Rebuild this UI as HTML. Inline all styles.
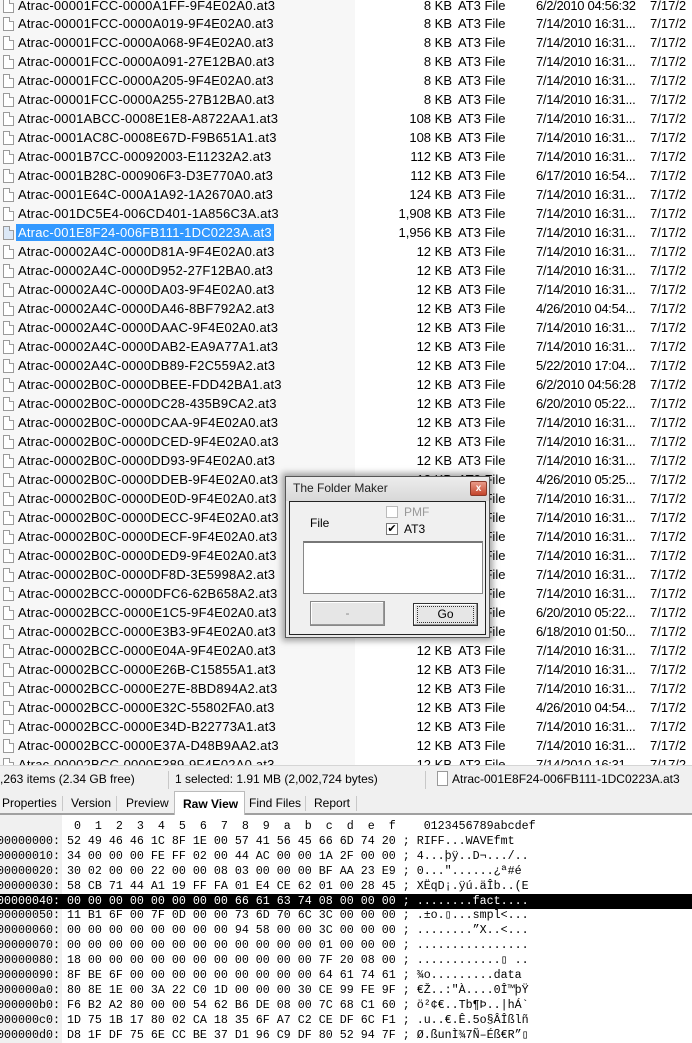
<!DOCTYPE html>
<html><head><meta charset="utf-8"><style>
*{margin:0;padding:0;box-sizing:border-box}
body{width:692px;height:1043px;overflow:hidden;background:#fff;position:relative;font-family:"Liberation Sans","Noto Sans CJK JP",sans-serif}
#list{position:absolute;left:0;top:0;width:692px;height:765px;overflow:hidden;background:#fff}
#list .band{position:absolute;left:0;top:0;width:355px;height:765px;background:#f7f7f7}
.r{position:absolute;left:0;height:19px;width:692px;font-size:13px;line-height:19px;color:#000;white-space:nowrap;letter-spacing:0.2px}
.r i{position:absolute;left:3px;top:3px;width:11px;height:14px;border:1px solid #9a9a9a;background:#fff}
.r i:after{content:"";position:absolute;right:-1px;top:-1px;width:4px;height:4px;background:#f7f7f7;border-left:1px solid #9a9a9a;border-bottom:1px solid #9a9a9a}
.r .n{position:absolute;left:18px}
.r .s{position:absolute;right:240px;text-align:right;letter-spacing:0}
.r .t{position:absolute;left:458px;letter-spacing:0}
.r .d{position:absolute;left:536px;letter-spacing:-0.3px}
.r .m{position:absolute;left:650px;letter-spacing:0}
.r.sel .n{background:#3399ff;color:#fff;left:16px;padding:0 2px;height:17px;top:1px;line-height:17px}
#status{position:absolute;left:0;top:765px;width:692px;height:28px;background:#f0f0f0;border-top:1px solid #d5d5d5;font-size:12px;line-height:27px;color:#000}
#status span{position:absolute}
.sep{position:absolute;top:5px;width:1px;height:18px;background:#c8c8c8}
#tabs{position:absolute;left:0;top:793px;width:692px;height:22px;background:#f0f0f0;border-bottom:2px solid #a0a0a0;font-size:12px;line-height:20px}
#tabs span{position:absolute;top:0}
#tabs .act{background:#fff;top:-2px;height:24px;border:1px solid #bbb;border-bottom:none;font-weight:bold;padding:2px 6px 0 8px}
#hex{position:absolute;left:0;top:815px;width:692px;height:228px;background:#fff;font-family:"Liberation Mono",monospace;font-size:11.67px;color:#000}
#hex .g{position:absolute;left:0;top:0;width:62px;height:228px;background:#f0f0f0}
#hex pre{position:absolute;left:-3px;top:4px;font-family:inherit;font-size:11.67px;line-height:14.9px}
#hex .hl{position:absolute;left:0;top:78.5px;width:692px;height:15px;background:#000}
#dlg{position:absolute;left:285px;top:476px;width:205px;height:162px;background:#e9e9e9;border:1px solid #555;box-shadow:0 0 6px 3px rgba(0,0,0,.35)}
#dlg .tb{position:absolute;left:0;top:0;width:203px;height:24px;background:linear-gradient(#ececec,#d8d8d8);font-size:12px;line-height:22px;padding-left:7px;color:#222}
#dlg .x{position:absolute;left:184px;top:4px;width:17px;height:15px;background:linear-gradient(#e89a88,#c4452c);border:1px solid #8a3a2a;border-radius:2px;color:#fff;font-size:10px;line-height:13px;text-align:center;font-weight:bold}
#dlg .in{position:absolute;left:3px;top:24px;width:197px;height:134px;border:1px solid #222;background:#f0f0f0}
.cb{position:absolute;width:12px;height:12px;border:1px solid #777;background:#fff;font-size:11px;line-height:10px;text-align:center}
.lbl{position:absolute;font-size:12px}
.btn{position:absolute;border:1px solid #888;background:#e6e6e6;font-size:12px;text-align:center;box-shadow:inset -1px -1px 0 #999,inset 1px 1px 0 #fff}
</style></head><body>
<div id="list"><div class="band"></div>
<div class="r" style="top:-4px"><i></i><span class="n">Atrac-00001FCC-0000A1FF-9F4E02A0.at3</span><span class="s">8 KB</span><span class="t">AT3 File</span><span class="d">6/2/2010 04:56:32</span><span class="m">7/17/2</span></div>
<div class="r" style="top:14px"><i></i><span class="n">Atrac-00001FCC-0000A019-9F4E02A0.at3</span><span class="s">8 KB</span><span class="t">AT3 File</span><span class="d">7/14/2010 16:31...</span><span class="m">7/17/2</span></div>
<div class="r" style="top:33px"><i></i><span class="n">Atrac-00001FCC-0000A068-9F4E02A0.at3</span><span class="s">8 KB</span><span class="t">AT3 File</span><span class="d">7/14/2010 16:31...</span><span class="m">7/17/2</span></div>
<div class="r" style="top:52px"><i></i><span class="n">Atrac-00001FCC-0000A091-27E12BA0.at3</span><span class="s">8 KB</span><span class="t">AT3 File</span><span class="d">7/14/2010 16:31...</span><span class="m">7/17/2</span></div>
<div class="r" style="top:71px"><i></i><span class="n">Atrac-00001FCC-0000A205-9F4E02A0.at3</span><span class="s">8 KB</span><span class="t">AT3 File</span><span class="d">7/14/2010 16:31...</span><span class="m">7/17/2</span></div>
<div class="r" style="top:90px"><i></i><span class="n">Atrac-00001FCC-0000A255-27B12BA0.at3</span><span class="s">8 KB</span><span class="t">AT3 File</span><span class="d">7/14/2010 16:31...</span><span class="m">7/17/2</span></div>
<div class="r" style="top:109px"><i></i><span class="n">Atrac-0001ABCC-0008E1E8-A8722AA1.at3</span><span class="s">108 KB</span><span class="t">AT3 File</span><span class="d">7/14/2010 16:31...</span><span class="m">7/17/2</span></div>
<div class="r" style="top:128px"><i></i><span class="n">Atrac-0001AC8C-0008E67D-F9B651A1.at3</span><span class="s">108 KB</span><span class="t">AT3 File</span><span class="d">7/14/2010 16:31...</span><span class="m">7/17/2</span></div>
<div class="r" style="top:147px"><i></i><span class="n">Atrac-0001B7CC-00092003-E11232A2.at3</span><span class="s">112 KB</span><span class="t">AT3 File</span><span class="d">7/14/2010 16:31...</span><span class="m">7/17/2</span></div>
<div class="r" style="top:166px"><i></i><span class="n">Atrac-0001B28C-000906F3-D3E770A0.at3</span><span class="s">112 KB</span><span class="t">AT3 File</span><span class="d">6/17/2010 16:54...</span><span class="m">7/17/2</span></div>
<div class="r" style="top:185px"><i></i><span class="n">Atrac-0001E64C-000A1A92-1A2670A0.at3</span><span class="s">124 KB</span><span class="t">AT3 File</span><span class="d">7/14/2010 16:31...</span><span class="m">7/17/2</span></div>
<div class="r" style="top:204px"><i></i><span class="n">Atrac-001DC5E4-006CD401-1A856C3A.at3</span><span class="s">1,908 KB</span><span class="t">AT3 File</span><span class="d">7/14/2010 16:31...</span><span class="m">7/17/2</span></div>
<div class="r sel" style="top:223px"><i style="background:#dbe8f7"></i><span class="n">Atrac-001E8F24-006FB111-1DC0223A.at3</span><span class="s">1,956 KB</span><span class="t">AT3 File</span><span class="d">7/14/2010 16:31...</span><span class="m">7/17/2</span></div>
<div class="r" style="top:242px"><i></i><span class="n">Atrac-00002A4C-0000D81A-9F4E02A0.at3</span><span class="s">12 KB</span><span class="t">AT3 File</span><span class="d">7/14/2010 16:31...</span><span class="m">7/17/2</span></div>
<div class="r" style="top:261px"><i></i><span class="n">Atrac-00002A4C-0000D952-27F12BA0.at3</span><span class="s">12 KB</span><span class="t">AT3 File</span><span class="d">7/14/2010 16:31...</span><span class="m">7/17/2</span></div>
<div class="r" style="top:280px"><i></i><span class="n">Atrac-00002A4C-0000DA03-9F4E02A0.at3</span><span class="s">12 KB</span><span class="t">AT3 File</span><span class="d">7/14/2010 16:31...</span><span class="m">7/17/2</span></div>
<div class="r" style="top:299px"><i></i><span class="n">Atrac-00002A4C-0000DA46-8BF792A2.at3</span><span class="s">12 KB</span><span class="t">AT3 File</span><span class="d">4/26/2010 04:54...</span><span class="m">7/17/2</span></div>
<div class="r" style="top:318px"><i></i><span class="n">Atrac-00002A4C-0000DAAC-9F4E02A0.at3</span><span class="s">12 KB</span><span class="t">AT3 File</span><span class="d">7/14/2010 16:31...</span><span class="m">7/17/2</span></div>
<div class="r" style="top:337px"><i></i><span class="n">Atrac-00002A4C-0000DAB2-EA9A77A1.at3</span><span class="s">12 KB</span><span class="t">AT3 File</span><span class="d">7/14/2010 16:31...</span><span class="m">7/17/2</span></div>
<div class="r" style="top:356px"><i></i><span class="n">Atrac-00002A4C-0000DB89-F2C559A2.at3</span><span class="s">12 KB</span><span class="t">AT3 File</span><span class="d">5/22/2010 17:04...</span><span class="m">7/17/2</span></div>
<div class="r" style="top:375px"><i></i><span class="n">Atrac-00002B0C-0000DBEE-FDD42BA1.at3</span><span class="s">12 KB</span><span class="t">AT3 File</span><span class="d">6/2/2010 04:56:28</span><span class="m">7/17/2</span></div>
<div class="r" style="top:394px"><i></i><span class="n">Atrac-00002B0C-0000DC28-435B9CA2.at3</span><span class="s">12 KB</span><span class="t">AT3 File</span><span class="d">6/20/2010 05:22...</span><span class="m">7/17/2</span></div>
<div class="r" style="top:413px"><i></i><span class="n">Atrac-00002B0C-0000DCAA-9F4E02A0.at3</span><span class="s">12 KB</span><span class="t">AT3 File</span><span class="d">7/14/2010 16:31...</span><span class="m">7/17/2</span></div>
<div class="r" style="top:432px"><i></i><span class="n">Atrac-00002B0C-0000DCED-9F4E02A0.at3</span><span class="s">12 KB</span><span class="t">AT3 File</span><span class="d">7/14/2010 16:31...</span><span class="m">7/17/2</span></div>
<div class="r" style="top:451px"><i></i><span class="n">Atrac-00002B0C-0000DD93-9F4E02A0.at3</span><span class="s">12 KB</span><span class="t">AT3 File</span><span class="d">7/14/2010 16:31...</span><span class="m">7/17/2</span></div>
<div class="r" style="top:470px"><i></i><span class="n">Atrac-00002B0C-0000DDEB-9F4E02A0.at3</span><span class="s">12 KB</span><span class="t">AT3 File</span><span class="d">4/26/2010 05:25...</span><span class="m">7/17/2</span></div>
<div class="r" style="top:489px"><i></i><span class="n">Atrac-00002B0C-0000DE0D-9F4E02A0.at3</span><span class="s">12 KB</span><span class="t">AT3 File</span><span class="d">7/14/2010 16:31...</span><span class="m">7/17/2</span></div>
<div class="r" style="top:508px"><i></i><span class="n">Atrac-00002B0C-0000DECC-9F4E02A0.at3</span><span class="s">12 KB</span><span class="t">AT3 File</span><span class="d">7/14/2010 16:31...</span><span class="m">7/17/2</span></div>
<div class="r" style="top:527px"><i></i><span class="n">Atrac-00002B0C-0000DECF-9F4E02A0.at3</span><span class="s">12 KB</span><span class="t">AT3 File</span><span class="d">7/14/2010 16:31...</span><span class="m">7/17/2</span></div>
<div class="r" style="top:546px"><i></i><span class="n">Atrac-00002B0C-0000DED9-9F4E02A0.at3</span><span class="s">12 KB</span><span class="t">AT3 File</span><span class="d">7/14/2010 16:31...</span><span class="m">7/17/2</span></div>
<div class="r" style="top:565px"><i></i><span class="n">Atrac-00002B0C-0000DF8D-3E5998A2.at3</span><span class="s">12 KB</span><span class="t">AT3 File</span><span class="d">7/14/2010 16:31...</span><span class="m">7/17/2</span></div>
<div class="r" style="top:584px"><i></i><span class="n">Atrac-00002BCC-0000DFC6-62B658A2.at3</span><span class="s">12 KB</span><span class="t">AT3 File</span><span class="d">7/14/2010 16:31...</span><span class="m">7/17/2</span></div>
<div class="r" style="top:603px"><i></i><span class="n">Atrac-00002BCC-0000E1C5-9F4E02A0.at3</span><span class="s">12 KB</span><span class="t">AT3 File</span><span class="d">6/20/2010 05:22...</span><span class="m">7/17/2</span></div>
<div class="r" style="top:622px"><i></i><span class="n">Atrac-00002BCC-0000E3B3-9F4E02A0.at3</span><span class="s">12 KB</span><span class="t">AT3 File</span><span class="d">6/18/2010 01:50...</span><span class="m">7/17/2</span></div>
<div class="r" style="top:641px"><i></i><span class="n">Atrac-00002BCC-0000E04A-9F4E02A0.at3</span><span class="s">12 KB</span><span class="t">AT3 File</span><span class="d">7/14/2010 16:31...</span><span class="m">7/17/2</span></div>
<div class="r" style="top:660px"><i></i><span class="n">Atrac-00002BCC-0000E26B-C15855A1.at3</span><span class="s">12 KB</span><span class="t">AT3 File</span><span class="d">7/14/2010 16:31...</span><span class="m">7/17/2</span></div>
<div class="r" style="top:679px"><i></i><span class="n">Atrac-00002BCC-0000E27E-8BD894A2.at3</span><span class="s">12 KB</span><span class="t">AT3 File</span><span class="d">7/14/2010 16:31...</span><span class="m">7/17/2</span></div>
<div class="r" style="top:698px"><i></i><span class="n">Atrac-00002BCC-0000E32C-55802FA0.at3</span><span class="s">12 KB</span><span class="t">AT3 File</span><span class="d">4/26/2010 04:54...</span><span class="m">7/17/2</span></div>
<div class="r" style="top:717px"><i></i><span class="n">Atrac-00002BCC-0000E34D-B22773A1.at3</span><span class="s">12 KB</span><span class="t">AT3 File</span><span class="d">7/14/2010 16:31...</span><span class="m">7/17/2</span></div>
<div class="r" style="top:736px"><i></i><span class="n">Atrac-00002BCC-0000E37A-D48B9AA2.at3</span><span class="s">12 KB</span><span class="t">AT3 File</span><span class="d">7/14/2010 16:31...</span><span class="m">7/17/2</span></div>
<div class="r" style="top:755px"><i></i><span class="n">Atrac-00002BCC-0000E389-9F4E02A0.at3</span><span class="s">12 KB</span><span class="t">AT3 File</span><span class="d">7/14/2010 16:31...</span><span class="m">7/17/2</span></div>
</div>

<div id="status">
<span style="left:0">,263 items (2.34 GB free)</span>
<div class="sep" style="left:168px"></div>
<span style="left:175px">1 selected: 1.91 MB (2,002,724 bytes)</span>
<div class="sep" style="left:425px"></div>
<div style="position:absolute;left:437px;top:5px;width:11px;height:15px;border:1px solid #999;background:#fff"></div>
<span style="left:452px">Atrac-001E8F24-006FB111-1DC0223A.at3</span>
</div>

<div id="tabs">
<span style="left:2px">Properties</span>
<div class="sep" style="left:62px;top:3px;height:15px"></div>
<span style="left:71px">Version</span>
<div class="sep" style="left:116px;top:3px;height:15px"></div>
<span style="left:126px">Preview</span>
<span class="act" style="left:174px">Raw View</span>
<span style="left:249px">Find Files</span>
<div class="sep" style="left:305px;top:3px;height:15px"></div>
<span style="left:314px">Report</span>
<div class="sep" style="left:356px;top:3px;height:15px"></div>
</div>

<div id="hex"><div class="g"></div><div class="hl"></div>
<pre>           0  1  2  3  4  5  6  7  8  9  a  b  c  d  e  f    0123456789abcdef
00000000: 52 49 46 46 1C 8F 1E 00 57 41 56 45 66 6D 74 20 ; RIFF...WAVEfmt 
00000010: 34 00 00 00 FE FF 02 00 44 AC 00 00 1A 2F 00 00 ; 4...þÿ..D¬.../..
00000020: 30 02 00 00 22 00 00 08 03 00 00 00 BF AA 23 E9 ; 0..."......¿ª#é
00000030: 58 CB 71 44 A1 19 FF FA 01 E4 CE 62 01 00 28 45 ; XËqD¡.ÿú.äÎb..(E
<span style="color:#fff">00000040: 00 00 00 00 00 00 00 00 66 61 63 74 08 00 00 00 ; ........fact....</span>
00000050: 11 B1 6F 00 7F 0D 00 00 73 6D 70 6C 3C 00 00 00 ; .±o.▯...smpl&lt;...
00000060: 00 00 00 00 00 00 00 00 94 58 00 00 3C 00 00 00 ; ........”X..&lt;...
00000070: 00 00 00 00 00 00 00 00 00 00 00 00 01 00 00 00 ; ................
00000080: 18 00 00 00 00 00 00 00 00 00 00 00 7F 20 08 00 ; ............▯ ..
00000090: 8F BE 6F 00 00 00 00 00 00 00 00 00 64 61 74 61 ; ¾o.........data
000000a0: 80 8E 1E 00 3A 22 C0 1D 00 00 00 30 CE 99 FE 9F ; €Ž..:"À....0Î™þŸ
000000b0: F6 B2 A2 80 00 00 54 62 B6 DE 08 00 7C 68 C1 60 ; ö²¢€..Tb¶Þ..|hÁ`
000000c0: 1D 75 1B 17 80 02 CA 18 35 6F A7 C2 CE DF 6C F1 ; .u..€.Ê.5o§ÂÎßlñ
000000d0: D8 1F DF 75 6E CC BE 37 D1 96 C9 DF 80 52 94 7F ; Ø.ßunÌ¾7Ñ–Éß€R”▯</pre>
</div>

<div id="dlg">
<div class="tb">The Folder Maker</div>
<div class="x">x</div>
<div class="in">
<span class="lbl" style="left:20px;top:14px">File</span>
<div class="cb" style="left:96px;top:4px;border-color:#bbb"></div>
<span class="lbl" style="left:114px;top:3px;color:#999">PMF</span>
<div class="cb" style="left:96px;top:21px">✔</div>
<span class="lbl" style="left:114px;top:20px">AT3</span>
<div style="position:absolute;left:13px;top:39px;width:180px;height:53px;background:#fff;border:1px solid #888;border-top:2px solid #777"></div>
<div class="btn" style="left:20px;top:99px;width:75px;height:25px;color:#888;line-height:22px">-</div>
<div class="btn" style="left:123px;top:101px;width:65px;height:23px;line-height:20px;border:1px solid #333"><span style="display:inline-block;border:1px dotted #333;width:57px;height:17px;margin-top:2px;line-height:15px">Go</span></div>
</div>
</div>
</body></html>
